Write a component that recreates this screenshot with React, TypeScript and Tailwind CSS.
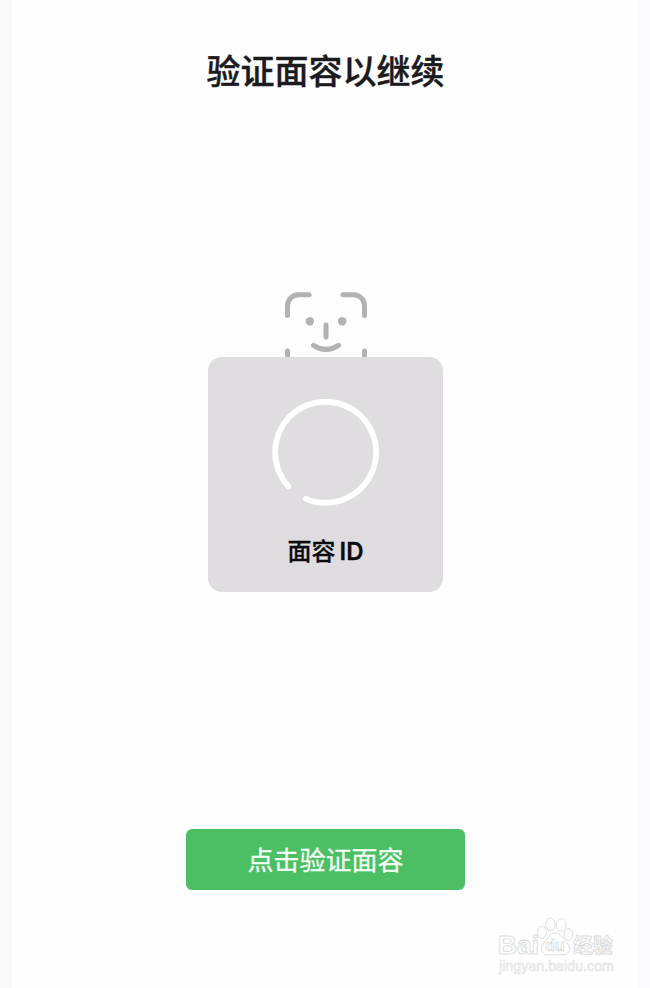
function FaceIcon() {
  return (
    <svg
      width={82}
      height={82}
      viewBox="0 0 82 82"
      fill="none"
      stroke="#b2b1b3"
      strokeWidth={5}
      strokeLinecap="round"
    >
      <path d="M2.5 23.5V14A11 11 0 0 1 13.5 2.8H24" />
      <path d="M58 2.8H68.5A11 11 0 0 1 79.5 14V23.5" />
      <path d="M2.5 59V68.5A11 11 0 0 0 13.5 79.5H24" />
      <path d="M79.5 59V68.5A11 11 0 0 1 68.5 79.5H58" />
      <path d="M41 33V45" />
      <path d="M28.5 53.3Q41 61.5 53.5 53.3" />
      <circle cx={24.8} cy={29.2} r={4.2} fill="#b2b1b3" stroke="none" />
      <circle cx={57.2} cy={29.2} r={4.2} fill="#b2b1b3" stroke="none" />
    </svg>
  );
}

function Spinner() {
  return (
    <svg
      width={108}
      height={108}
      viewBox="0 0 108 108"
      fill="none"
      stroke="#ffffff"
      strokeWidth={5.8}
      strokeLinecap="round"
    >
      <path d="M16.5 87.5A50.5 50.5 0 1 1 34 99.8" />
    </svg>
  );
}

function Watermark() {
  return (
    <svg
      className="absolute top-[910px] left-[490px]"
      width={135}
      height={70}
      viewBox="0 0 135 70"
      fill="#fefefe"
      stroke="#dededf"
      strokeWidth={1}
      strokeLinejoin="round"
      fontFamily='"Liberation Sans", "Noto Sans CJK SC", sans-serif'
    >
      <text x={8} y={44} fontSize={26} fontWeight={700} textLength={41} lengthAdjust="spacingAndGlyphs">
        Bai
      </text>
      <ellipse cx={52} cy={22.5} rx={4.6} ry={6} />
      <ellipse cx={60.5} cy={14.5} rx={4.8} ry={6.3} />
      <ellipse cx={71.3} cy={15} rx={5} ry={6.3} />
      <ellipse cx={78.5} cy={24.5} rx={4.3} ry={6} />
      <path d="M65 23C70.500 23 72.500 28 77 33C82 38 79.500 44.800 73 44.800H58C51 44.800 49 38 54 33C58 28 60 23 65 23Z" />
      <text x={55.5} y={41} fontSize={17} fontWeight={700} textLength={19} lengthAdjust="spacingAndGlyphs">
        du
      </text>
      <text x={83} y={42.5} fontSize={20} fontWeight={700} textLength={40}>
        经验
      </text>
      <text x={9} y={60.5} fontSize={14} strokeWidth={0.6} textLength={115} lengthAdjust="spacingAndGlyphs">
        jingyan.baidu.com
      </text>
    </svg>
  );
}

export default function App() {
  return (
    <div className="relative flex h-[988px] w-[650px] bg-[#fefdff] font-['Noto_Sans_CJK_SC',sans-serif]">
      <div className="w-3 shrink-0 bg-[#f9f9fb]" />
      <main className="flex flex-1 flex-col items-center">
        <h1 className="mt-[45px] h-[51px] text-[34px] leading-[50px] font-medium text-[#1b1a1c] [-webkit-text-stroke:0.4px_#1b1a1c]">
          验证面容以继续
        </h1>
        <div className="mt-[196px] h-[65px]">
          <FaceIcon />
        </div>
        <section className="z-10 flex h-[235px] w-[235px] flex-col items-center rounded-[14px] bg-[#dfdde0] pt-[42px]">
          <Spinner />
          <p className="mt-[25px] text-[24px] leading-[36px] font-medium text-[#0c0b0d] [-webkit-text-stroke:0.3px_#0c0b0d]">
            面容
            <span className="ml-1 font-['Inter'] font-semibold">ID</span>
          </p>
        </section>
        <button className="mt-[237px] h-[61px] w-[279px] rounded-md bg-[#4cbf65] pb-0.5 text-[26px] leading-[59px] text-[#f3fff5] [-webkit-text-stroke:0.3px_#f3fff5]">
          点击验证面容
        </button>
      </main>
      <div className="w-[11px] shrink-0 bg-[#fbfbfd]" />
      <Watermark />
    </div>
  );
}
